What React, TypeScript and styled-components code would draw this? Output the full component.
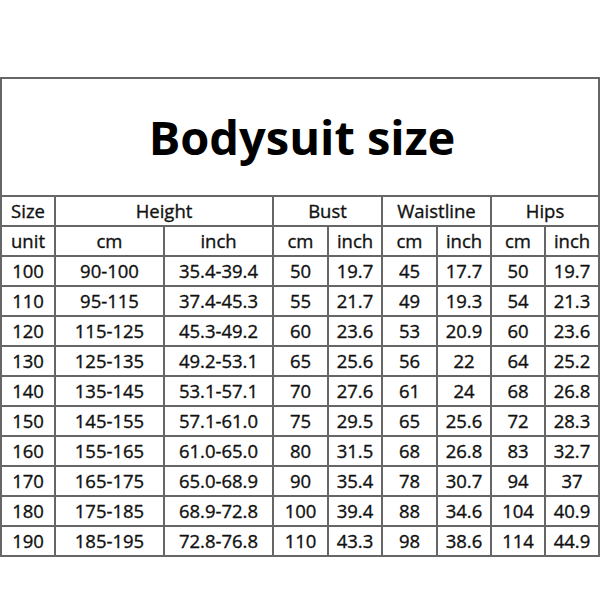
import React from "react";
import styled, { createGlobalStyle } from "styled-components";

const Global = createGlobalStyle`
  html, body { margin: 0; padding: 0; background: #ffffff; }
  body { font-family: "Open Sans", "Noto Sans", sans-serif; color: #111; }
`;

const Page = styled.div`
  width: 600px;
  height: 600px;
  padding-top: 77px;
  box-sizing: border-box;
`;

const Table = styled.table`
  width: 598px;
  border-collapse: collapse;
  table-layout: fixed;
`;

const TitleCell = styled.th`
  height: 116px;
  border: 2px solid #666;
  font-size: 47px;
  font-weight: 700;
  color: #000;
  text-align: center;
  vertical-align: middle;
  padding: 0 0 0 4px;
`;

const Cell = styled.td`
  height: 28px;
  border: 2px solid #666;
  padding: 0;
  text-align: center;
  vertical-align: middle;
  font-size: 18.5px;
  font-weight: 400;
  -webkit-text-stroke: 0.35px #111;
  color: #111;
  white-space: nowrap;
  line-height: 1;
`;

const widths = [54, 109, 109, 55, 54, 55, 54, 54, 54];

const rows: string[][] = [
  ["100", "90-100", "35.4-39.4", "50", "19.7", "45", "17.7", "50", "19.7"],
  ["110", "95-115", "37.4-45.3", "55", "21.7", "49", "19.3", "54", "21.3"],
  ["120", "115-125", "45.3-49.2", "60", "23.6", "53", "20.9", "60", "23.6"],
  ["130", "125-135", "49.2-53.1", "65", "25.6", "56", "22", "64", "25.2"],
  ["140", "135-145", "53.1-57.1", "70", "27.6", "61", "24", "68", "26.8"],
  ["150", "145-155", "57.1-61.0", "75", "29.5", "65", "25.6", "72", "28.3"],
  ["160", "155-165", "61.0-65.0", "80", "31.5", "68", "26.8", "83", "32.7"],
  ["170", "165-175", "65.0-68.9", "90", "35.4", "78", "30.7", "94", "37"],
  ["180", "175-185", "68.9-72.8", "100", "39.4", "88", "34.6", "104", "40.9"],
  ["190", "185-195", "72.8-76.8", "110", "43.3", "98", "38.6", "114", "44.9"],
];

export default function App() {
  return (
    <>
      <Global />
      <Page>
        <Table>
          <colgroup>
            {widths.map((w, i) => (
              <col key={i} style={{ width: w }} />
            ))}
          </colgroup>
          <tbody>
            <tr>
              <TitleCell colSpan={9}>Bodysuit size</TitleCell>
            </tr>
            <tr>
              <Cell>Size</Cell>
              <Cell colSpan={2}>Height</Cell>
              <Cell colSpan={2}>Bust</Cell>
              <Cell colSpan={2}>Waistline</Cell>
              <Cell colSpan={2}>Hips</Cell>
            </tr>
            <tr>
              <Cell>unit</Cell>
              <Cell>cm</Cell>
              <Cell>inch</Cell>
              <Cell>cm</Cell>
              <Cell>inch</Cell>
              <Cell>cm</Cell>
              <Cell>inch</Cell>
              <Cell>cm</Cell>
              <Cell>inch</Cell>
            </tr>
            {rows.map((r, i) => (
              <tr key={i}>
                {r.map((v, j) => (
                  <Cell key={j}>{v}</Cell>
                ))}
              </tr>
            ))}
          </tbody>
        </Table>
      </Page>
    </>
  );
}
